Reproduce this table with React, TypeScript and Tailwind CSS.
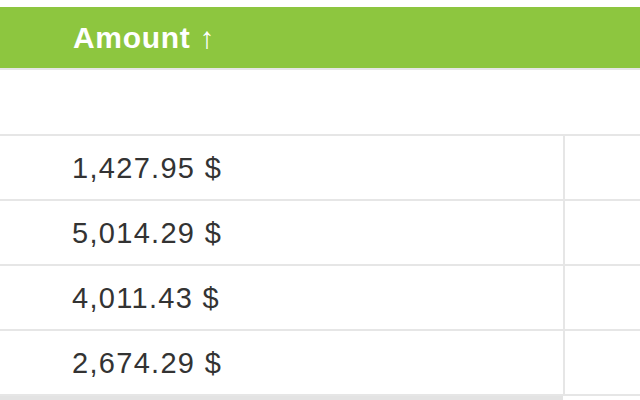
const rows = ["1,427.95 $", "5,014.29 $", "4,011.43 $", "2,674.29 $"];

export default function App() {
  return (
    <div
      className="h-[400px] w-[640px] overflow-hidden bg-white text-[#333333]"
      style={{ fontFamily: '"Liberation Sans", Arial, sans-serif' }}
    >
      <div className="h-[7px]" />
      <div className="flex h-[63px] items-center border-b-2 border-[#e6e6e6] bg-[#8dc63f] pl-[73px] text-[30px] font-bold tracking-[0.7px] text-white">
        Amount ↑
      </div>
      <div className="h-[66px] border-b-2 border-[#e6e6e6]" />
      {rows.map((amount) => (
        <div className="flex h-[65px] border-b-2 border-[#e6e6e6]" key={amount}>
          <div className="flex w-[565px] items-center border-r-2 border-[#e6e6e6] pt-[2px] pl-[72px] text-[29px] tracking-[1.3px]">
            {amount}
          </div>
          <div className="flex-1" />
        </div>
      ))}
      <div className="h-[4px] w-[563px] bg-[#e3e3e3]" />
    </div>
  );
}
